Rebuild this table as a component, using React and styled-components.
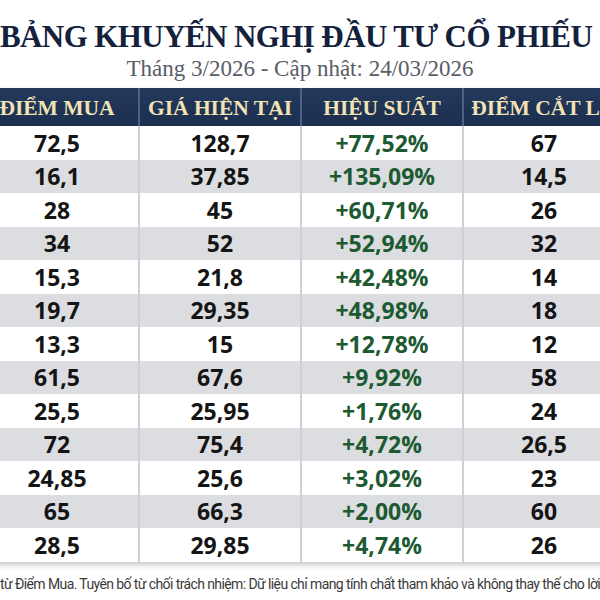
import React from "react";
import styled, { createGlobalStyle } from "styled-components";

const GlobalStyle = createGlobalStyle`
  html, body {
    margin: 0;
    padding: 0;
    background: #ffffff;
  }
`;

const rows = [
  ["72,5", "128,7", "+77,52%", "67"],
  ["16,1", "37,85", "+135,09%", "14,5"],
  ["28", "45", "+60,71%", "26"],
  ["34", "52", "+52,94%", "32"],
  ["15,3", "21,8", "+42,48%", "14"],
  ["19,7", "29,35", "+48,98%", "18"],
  ["13,3", "15", "+12,78%", "12"],
  ["61,5", "67,6", "+9,92%", "58"],
  ["25,5", "25,95", "+1,76%", "24"],
  ["72", "75,4", "+4,72%", "26,5"],
  ["24,85", "25,6", "+3,02%", "23"],
  ["65", "66,3", "+2,00%", "60"],
  ["28,5", "29,85", "+4,74%", "26"],
];

const headers = ["ĐIỂM MUA", "GIÁ HIỆN TẠI", "HIỆU SUẤT", "ĐIỂM CẮT LỖ"];

function App() {
  return (
    <>
      <GlobalStyle />
      <Page>
        <Title>BẢNG KHUYẾN NGHỊ ĐẦU TƯ CỔ PHIẾU</Title>
        <Subtitle>Tháng 3/2026 - Cập nhật: 24/03/2026</Subtitle>
        <Table>
          <HeadRow>
            {headers.map((h) => (
              <HeadCell key={h}>{h}</HeadCell>
            ))}
          </HeadRow>
          {rows.map((r, i) => (
            <Row key={i} $alt={i % 2 === 1}>
              <Cell>{r[0]}</Cell>
              <Cell>{r[1]}</Cell>
              <Cell $green>{r[2]}</Cell>
              <Cell>{r[3]}</Cell>
            </Row>
          ))}
        </Table>
        <Footer>
          từ Điểm Mua. Tuyên bố từ chối trách nhiệm: Dữ liệu chỉ mang tính chất tham khảo và không thay thế cho lời
        </Footer>
      </Page>
    </>
  );
}

export default App;

const Page = styled.div`
  width: 600px;
  height: 600px;
  overflow: hidden;
  background: #ffffff;
`;

const Title = styled.h1`
  margin: 0;
  padding-top: 20px;
  width: 592px;
  text-align: center;
  white-space: nowrap;
  font-family: "Liberation Serif", "DejaVu Serif", serif;
  font-weight: 700;
  font-size: 31px;
  letter-spacing: -0.6px;
  line-height: 33px;
  color: #14213d;
`;

const Subtitle = styled.div`
  margin-top: 2px;
  width: 600px;
  text-align: center;
  font-family: "Liberation Serif", "DejaVu Serif", serif;
  font-size: 23px;
  line-height: 28px;
  color: #585c66;
`;

const Table = styled.div`
  margin-top: 5px;
  margin-left: -24px;
  width: 648px;
  box-shadow: 0 3px 5px rgba(0, 0, 0, 0.22);
`;

const HeadRow = styled.div`
  display: grid;
  grid-template-columns: repeat(4, 162px);
  height: 38px;
  background: linear-gradient(180deg, #23395c 0%, #1b2f4f 100%);
`;

const HeadCell = styled.div`
  display: flex;
  align-items: center;
  justify-content: center;
  white-space: nowrap;
  border-left: 2px solid #4c6386;
  font-family: "Liberation Serif", "DejaVu Serif", serif;
  font-weight: 700;
  font-size: 21.5px;
  color: #f2e2b4;
  padding-top: 2px;

  &:first-child {
    border-left: none;
  }
`;

const Row = styled.div`
  display: grid;
  grid-template-columns: repeat(4, 162px);
  height: 33.5px;
  background: ${(p) => (p.$alt ? "#dcdde1" : "#ffffff")};
`;

const Cell = styled.div`
  display: flex;
  align-items: center;
  justify-content: center;
  border-left: 2px solid #cfd0d4;
  font-family: "Open Sans", "DejaVu Sans", sans-serif;
  font-weight: 700;
  font-size: 23px;
  color: ${(p) => (p.$green ? "#1d5a31" : "#141414")};

  &:first-child {
    border-left: none;
  }
`;

const Footer = styled.div`
  margin-top: 14px;
  white-space: nowrap;
  font-family: Roboto, "Liberation Sans", sans-serif;
  font-size: 14px;
  letter-spacing: -0.6px;
  color: #3a3a3a;
`;
